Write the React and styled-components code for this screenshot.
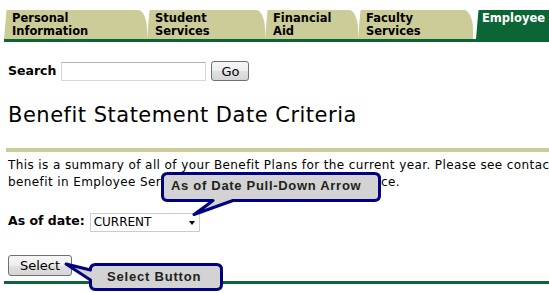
import React from "react";
import styled, { createGlobalStyle } from "styled-components";

const TAN = "#cccc99";
const GREEN = "#0b6535";
const NAVY = "#000080";

const Global = createGlobalStyle`
  html, body { margin: 0; padding: 0; background: #fff; overflow: hidden; }
  body { font-family: "DejaVu Sans", Verdana, sans-serif; color: #000; }
`;

const Page = styled.div`
  position: relative;
  width: 549px;
  height: 293px;
  overflow: hidden;
  box-sizing: border-box;
  padding: 10px 0 0 4px;
`;

const TabBar = styled.div`
  display: flex;
  align-items: flex-end;
  overflow: hidden;
  height: 29px;
`;

const Tab = styled.div`
  box-sizing: border-box;
  flex: none;
  width: ${(p) => p.$w}px;
  height: 29px;
  margin-left: ${(p) => p.$ml || 0}px;
  padding: 2px 0 0 ${(p) => p.$pl || 8}px;
  background: ${(p) => (p.$active ? GREEN : TAN)};
  color: ${(p) => (p.$active ? "#fff" : "#000")};
  border-radius: 4px 9px 0 0 / 4px 20px 0 0;
  clip-path: polygon(2.5px 0, 100% 0, 100% 100%, 0 100%);
  font: bold 11.5px/13px "DejaVu Sans", Verdana, sans-serif;
  white-space: nowrap;
`;

const GreenRule = styled.div`
  height: 3px;
  background: ${GREEN};
  margin-top: ${(p) => p.$mt || 0}px;
`;

const Content = styled.div`
  padding-left: 4px;
`;

const SearchRow = styled.div`
  display: flex;
  align-items: center;
  gap: 5px;
  margin-top: 19px;
  height: 20px;
`;

const Label = styled.label`
  font: bold 12.5px/16px "DejaVu Sans", Verdana, sans-serif;
  white-space: nowrap;
`;

const TextInput = styled.input`
  box-sizing: border-box;
  width: 145px;
  height: 19px;
  margin: 0;
  border: 1px solid #d3d8de;
  border-top-color: #adb2b9;
  background: #fff;
  outline: none;
`;

const Button = styled.button`
  box-sizing: border-box;
  width: ${(p) => p.$w}px;
  height: ${(p) => p.$h}px;
  margin: 0;
  padding: 0;
  border: 1px solid #707070;
  border-radius: 3px;
  background: linear-gradient(#f6f6f6 0%, #eeeeee 50%, #e0e0e0 51%, #d6d6d6 100%);
  color: #000;
  font: 13px/1 "DejaVu Sans", Verdana, sans-serif;
  display: flex;
  align-items: center;
  justify-content: center;
`;

const Heading = styled.h1`
  margin: 22px 0 0;
  font: normal 21px/24px "DejaVu Sans", Verdana, sans-serif;
  letter-spacing: 0.5px;
  white-space: nowrap;
`;

const TanRule = styled.div`
  margin: 21px 0 0 -2px;
  height: 4px;
  background: ${TAN};
`;

const Paragraph = styled.p`
  margin: 5px 0 0;
  font: 12px/16.5px "DejaVu Sans", Verdana, sans-serif;
  letter-spacing: 0.4px;
  white-space: nowrap;
`;

const DateRow = styled.div`
  display: flex;
  align-items: flex-start;
  gap: 5px;
  margin-top: 23px;
`;

const Dropdown = styled.div`
  box-sizing: border-box;
  width: 110px;
  height: 19px;
  border: 1px solid #c9cdd2;
  display: flex;
  align-items: center;
  justify-content: space-between;
  padding: 0 4px 0 3px;
  font: 12px/17px "DejaVu Sans", Verdana, sans-serif;
`;

const Caret = styled.span`
  width: 0;
  height: 0;
  border-left: 3.5px solid transparent;
  border-right: 3.5px solid transparent;
  border-top: 4px solid #000;
  margin-top: 1px;
`;

const ButtonRow = styled.div`
  margin-top: 23px;
`;

const CalloutSvg = styled.svg`
  position: absolute;
  left: 0;
  top: 0;
  pointer-events: none;
`;

const CalloutText = styled.span`
  position: absolute;
  left: ${(p) => p.$x}px;
  top: ${(p) => p.$y}px;
  font: bold 13px/15px "Liberation Sans", Arial, sans-serif;
  letter-spacing: ${(p) => p.$ls}px;
  color: #222;
  white-space: nowrap;
`;

const tabs = [
  { label: ["Personal", "Information"], w: 143 },
  { label: ["Student", "Services"], w: 118 },
  { label: ["Financial", "Aid"], w: 93 },
  { label: ["Faculty", "Services"], w: 115 },
];

export default function App() {
  return (
    <>
      <Global />
      <Page>
        <TabBar>
          {tabs.map((t) => (
            <Tab key={t.label[0]} $w={t.w}>
              {t.label[0]}
              <br />
              {t.label[1]}
            </Tab>
          ))}
          <Tab $w={90} $ml={3} $pl={6} $active>
            Employee
          </Tab>
        </TabBar>
        <GreenRule />
        <Content>
          <SearchRow>
            <Label>Search</Label>
            <TextInput type="text" />
            <Button $w={38} $h={20}>Go</Button>
          </SearchRow>
          <Heading>Benefit Statement Date Criteria</Heading>
          <TanRule />
          <Paragraph>
            This is a summary of all of your Benefit Plans for the current year. Please see contact information for each
            <br />
            benefit in Employee Services Contacts for further assistance.
          </Paragraph>
          <DateRow>
            <Label>As of date:</Label>
            <Dropdown>
              <span>CURRENT</span>
              <Caret />
            </Dropdown>
          </DateRow>
          <ButtonRow>
            <Button $w={64} $h={21}>Select</Button>
          </ButtonRow>
        </Content>
        <GreenRule $mt={5} />

        <CalloutSvg width="549" height="293" viewBox="0 0 549 293">
          <path
            d="M167.5 173.5 H374.5 Q379.5 173.5 379.5 178.5 V195.5 Q379.5 200.5 374.5 200.5 H233 L194 214.5 Q206 206 213 200.5 H167.5 Q162.5 200.5 162.5 195.5 V178.5 Q162.5 173.5 167.5 173.5 Z"
            fill="#d3d3d3"
            stroke={NAVY}
            strokeWidth="3"
            strokeLinejoin="round"
          />
          <path
            d="M95.5 264.5 H216.5 Q221.5 264.5 221.5 269.5 V284.5 Q221.5 289.5 216.5 289.5 H95.5 Q90.5 289.5 90.5 284.5 V280 L66 264 L90.5 270 V269.5 Q90.5 264.5 95.5 264.5 Z"
            fill="#d3d3d3"
            stroke={NAVY}
            strokeWidth="3"
            strokeLinejoin="round"
          />
        </CalloutSvg>
        <CalloutText $x={171} $y={178} $ls={0.7}>As of Date Pull-Down Arrow</CalloutText>
        <CalloutText $x={107} $y={269} $ls={0.8}>Select Button</CalloutText>
      </Page>
    </>
  );
}
